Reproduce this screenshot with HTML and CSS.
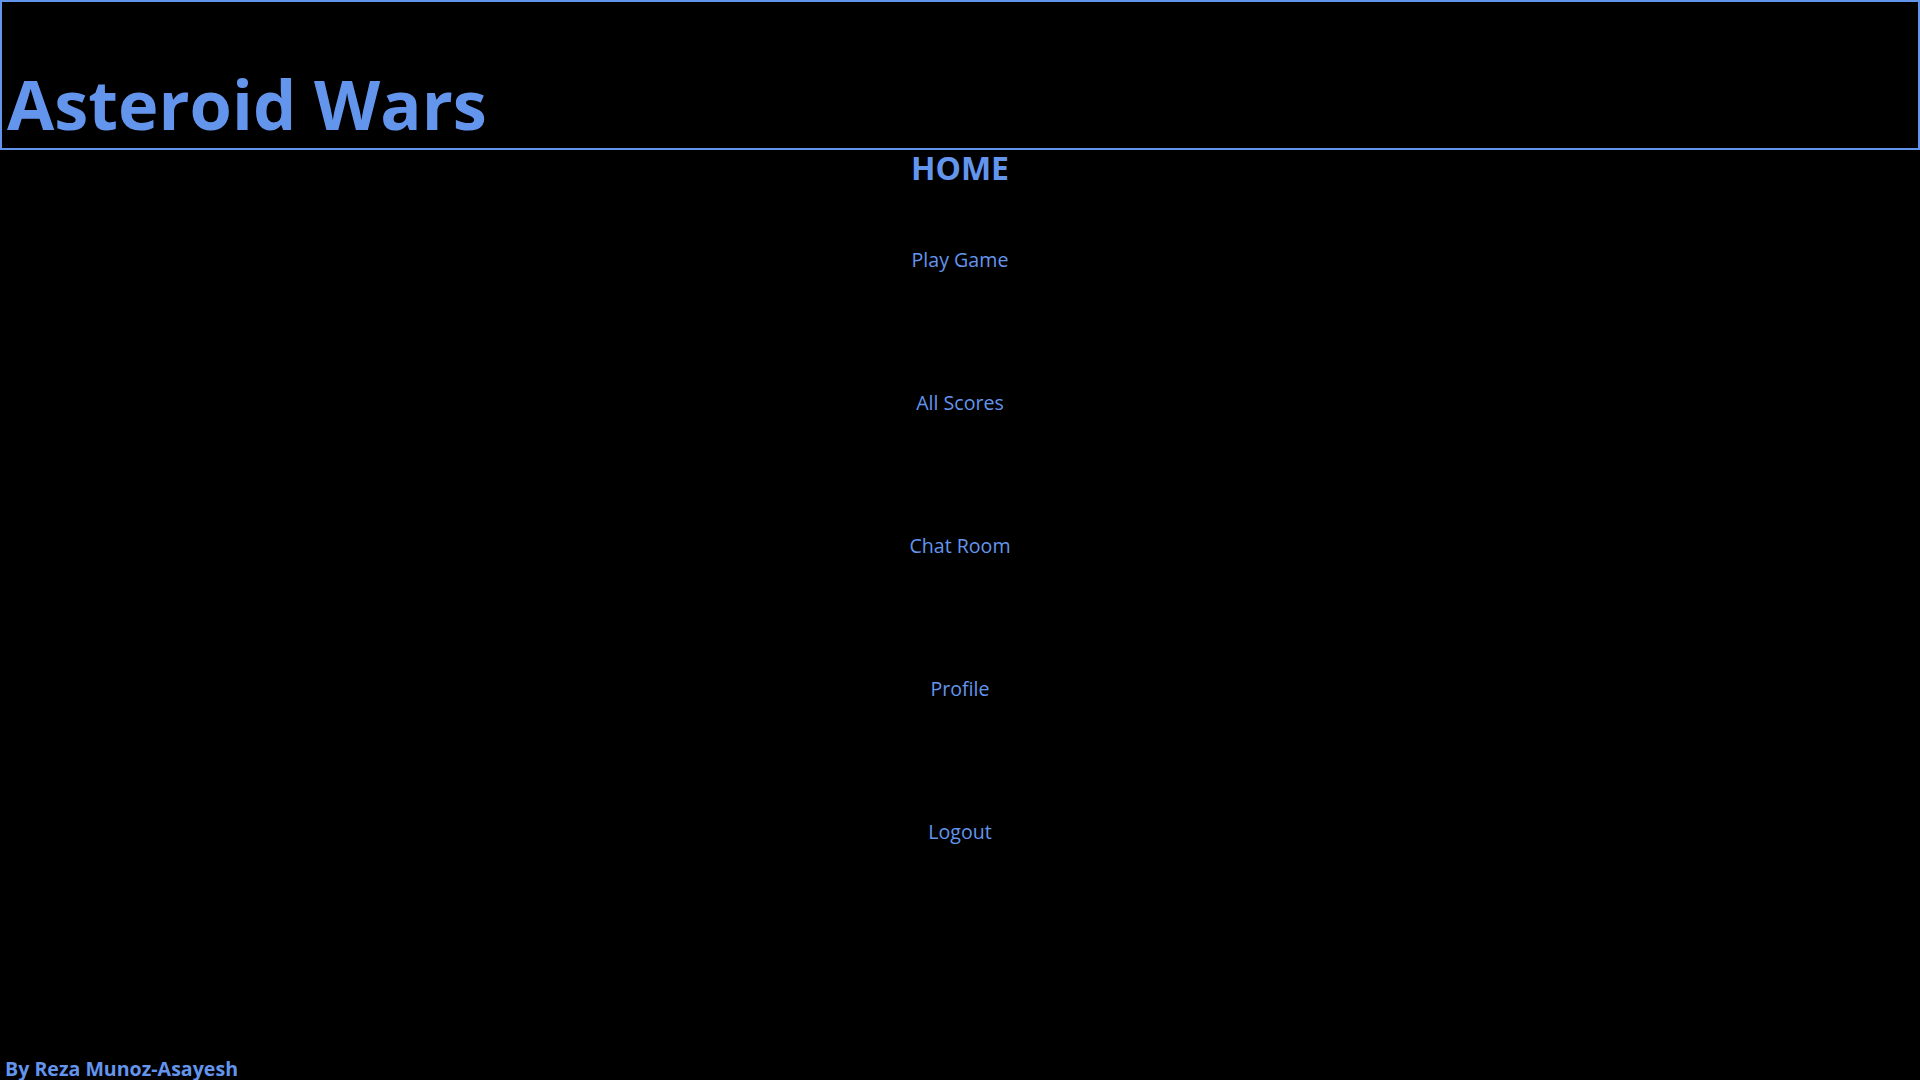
FILE: index.html
```html
<!DOCTYPE html>
<html lang="en">
<head>
<meta charset="utf-8">
<title>Asteroid Wars</title>
<link rel="stylesheet" href="styles.css">
</head>
<body>
<div class="page">
  <header class="banner">
    <h1 class="title">Asteroid Wars</h1>
  </header>
  <main class="home">
    <h2 class="home-heading">HOME</h2>
    <nav class="menu">
      <a class="menu-link" href="#">Play Game</a>
      <a class="menu-link" href="#">All Scores</a>
      <a class="menu-link" href="#">Chat Room</a>
      <a class="menu-link" href="#">Profile</a>
      <a class="menu-link" href="#">Logout</a>
    </nav>
  </main>
  <footer class="credit">By Reza Munoz-Asayesh</footer>
</div>
</body>
</html>
```
FILE: styles.css
```css
html, body {
  margin: 0;
  padding: 0;
  background: #000;
}

body {
  color: #6495ed;
  font-family: "Open Sans", "DejaVu Sans", sans-serif;
}

.page {
  display: flex;
  flex-direction: column;
  min-height: 100vh;
  box-sizing: border-box;
}

.banner {
  box-sizing: border-box;
  height: 150px;
  border: 2px solid #6495ed;
  display: flex;
  align-items: flex-end;
  padding: 0 0 10px 5px;
}

.title {
  margin: 0;
  font-size: 68.5px;
  font-weight: 700;
  line-height: 1;
}

.home {
  display: flex;
  flex-direction: column;
  align-items: center;
}

.home-heading {
  margin: 2px 0 0;
  font-size: 32px;
  font-weight: 700;
  line-height: 1;
}

.menu {
  display: flex;
  flex-direction: column;
  align-items: center;
  gap: 123.5px;
  margin-top: 66px;
}

.menu-link {
  color: #6495ed;
  text-decoration: none;
  font-size: 19.6px;
  line-height: 1;
}

.credit {
  margin-top: auto;
  padding: 0 0 1px 5px;
  font-size: 19.6px;
  font-weight: 700;
  line-height: 1;
}
```
